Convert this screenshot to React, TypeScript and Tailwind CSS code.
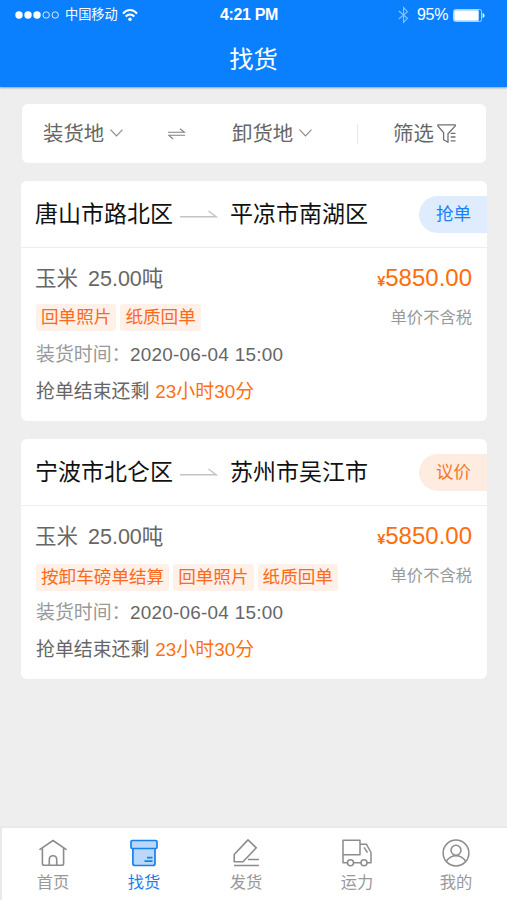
import React from "react";
import clsx from "clsx";

interface IOrder {
   id: number;
   from: string;
   to: string;
   action: string;
   actionType: "grab" | "negotiate";
   tags: string[];
}

const orders: IOrder[] = [
   {
      id: 1,
      from: "唐山市路北区",
      to: "平凉市南湖区",
      action: "抢单",
      actionType: "grab",
      tags: ["回单照片", "纸质回单"],
   },
   {
      id: 2,
      from: "宁波市北仑区",
      to: "苏州市吴江市",
      action: "议价",
      actionType: "negotiate",
      tags: ["按卸车磅单结算", "回单照片", "纸质回单"],
   },
];

const StatusBar = () => {
   return (
      <div className="flex h-[30px] items-center pr-[21px] pl-[15px] text-white">
         <div className="flex w-[205px] items-center">
            <svg width="46" height="8" viewBox="0 0 46 8">
               <circle cx="4" cy="4" r="3.7" fill="#fff" />
               <circle cx="13" cy="4" r="3.7" fill="#fff" />
               <circle cx="22" cy="4" r="3.7" fill="#fff" />
               <circle cx="31.2" cy="4" r="3.2" fill="none" stroke="#d6e8ff" />
               <circle cx="40.2" cy="4" r="3.2" fill="none" stroke="#d6e8ff" />
            </svg>
            <span className="ml-[4px] text-[13.2px] leading-[20px]">中国移动</span>
            <svg className="ml-[4px]" width="16" height="13" viewBox="0 0 16 13" fill="none" stroke="#fff" strokeWidth="2">
               <path d="M1 4.6C5-.1 11-.1 15 4.6" />
               <path d="M3.7 7.5C6.3 4.7 9.7 4.7 12.3 7.5" />
               <circle cx="8" cy="10.2" r="1.7" fill="#fff" stroke="none" />
            </svg>
         </div>
         <span className="w-[178px] text-[16px] font-bold tracking-[-0.35px]">4:21 PM</span>
         <svg width="11" height="18" viewBox="0 0 11 18" fill="none" stroke="#8cc0ff" strokeWidth="1.1">
            <path d="M.8 5 9.5 12.4 5.6 16.4V1.6L9.5 5.6.8 13" />
         </svg>
         <span className="ml-[8px] w-[36px] text-[16px] tracking-[-0.3px]">95%</span>
         <svg width="32" height="13" viewBox="0 0 32 13">
            <rect x=".5" y=".5" width="28" height="12" rx="1.8" fill="none" stroke="#a9d0ff" />
            <rect x="1.2" y="1.2" width="24.5" height="10.6" rx=".8" fill="#fff" />
            <path d="M29.6 4c2.6 1 2.6 4 0 5z" fill="#fff" />
         </svg>
      </div>
   );
};

const ChevronDown = () => (
   <svg className="ml-[6px]" width="13" height="8" viewBox="0 0 13 8" fill="none" stroke="#8a8a8a" strokeWidth="1.1">
      <path d="M.5.7 6.5 7l6-6.3" />
   </svg>
);

const FilterBar = () => {
   return (
      <div className="ml-[22px] flex h-[59px] w-[464px] items-center rounded-[6px] bg-white pl-[21px] text-[20.4px] text-[#666]">
         <div className="flex w-[125px] items-center">
            <span className="pt-[2px]">装货地</span>
            <ChevronDown />
         </div>
         <svg width="18" height="12" viewBox="0 0 18 12" fill="none" stroke="#808080" strokeWidth="1.1">
            <path d="M0 4.3H16.4L12 .8M17 7.3H.9L5 11" />
         </svg>
         <div className="ml-[46px] flex w-[125px] items-center">
            <span className="pt-[2px]">卸货地</span>
            <ChevronDown />
         </div>
         <div className="h-5 w-px bg-[#e6e6e6]" />
         <div className="ml-[35px] flex items-center">
            <span className="pt-[2px]">筛选</span>
            <svg className="ml-[3px]" width="20" height="19" viewBox="0 0 20 19" fill="none" stroke="#707070" strokeWidth="1.3">
               <path d="M12.2 8.5 18.3 1.9V.9H.9V2L6.6 8.6V15.7L11 18.3V9.7Z" strokeLinejoin="round" />
               <path d="M13.7 9.3H18.5M13.7 13H18.5M13.7 16.8H18.5" />
            </svg>
         </div>
      </div>
   );
};

const OrderCard = ({ order }: { order: IOrder }) => {
   return (
      <div className="ml-[21px] h-[240px] w-[466px] overflow-hidden rounded-[6px] bg-white pl-[15px]">
         <div className="-ml-[15px] flex h-[67px] items-center border-b border-[#eee] pl-[15px] text-[23px] text-[#111]">
            <span className="-ml-px w-[144px]">{order.from}</span>
            <svg className="ml-px" width="38" height="8" viewBox="0 0 38 8" fill="none" stroke="#c4c4c4" strokeWidth="1.4">
               <path d="M0 6.7H36L28.5 1" />
            </svg>
            <span className="ml-[12px] w-[189px]">{order.to}</span>
            <div
               className={clsx(
                  "flex h-[37px] flex-1 items-center rounded-l-full pl-[17px] text-[17.6px]",
                  order.actionType === "grab"
                     ? "bg-[#dfecfd] text-[#1683fa]"
                     : "bg-[#ffece1] text-[#f7762a]"
               )}
            >
               {order.action}
            </div>
         </div>
         <div className="mt-[11px] flex h-[38px] items-center justify-between pr-[15px]">
            <div className="-ml-px flex gap-[10px] pt-[2px] text-[21.5px] text-[#666]">
               <span>玉米</span>
               <span>25.00吨</span>
            </div>
            <div className="flex items-baseline text-[#ff6d0d]">
               <span className="text-[14.5px] font-bold">¥</span>
               <span className="text-[24px]">5850.00</span>
            </div>
         </div>
         <div className="flex h-[40px] items-center justify-between pr-[15px]">
            <div className={clsx("flex gap-[4px]", order.tags.length > 2 && "pt-[4px]")}>
               {order.tags.map((tag) => (
                  <span
                     key={tag}
                     className="flex h-[27px] items-center rounded-[3px] bg-[#fff0e8] px-[5px] text-[17.6px] text-[#fb6a1c]"
                  >
                     {tag}
                  </span>
               ))}
            </div>
            <span className="text-[16.3px] text-[#999]">单价不含税</span>
         </div>
         <div className="flex h-[36px] items-center text-[18.9px]">
            <span className="w-[94px] text-[#999]">装货时间：</span>
            <span className="tracking-[0.25px] text-[#666]">2020-06-04 15:00</span>
         </div>
         <div className="flex h-[38px] items-center gap-[6px] text-[18.9px]">
            <span className="text-[#666]">抢单结束还剩</span>
            <span className="text-[#ff7010]">23小时30分</span>
         </div>
      </div>
   );
};

const HomeIcon = () => (
   <svg width="28" height="28" viewBox="0 0 28 28" fill="none" stroke="#8c8c8c" strokeWidth="1.6" strokeLinejoin="round" strokeLinecap="round">
      <path d="M1 10.3 14 1.5 27 10.3M3.4 9.4V24.5Q3.4 26.3 5.2 26.3H22.8Q24.6 26.3 24.6 24.5V9.4" />
      <path d="M10.3 26V20.5C10.3 15.5 17.7 15.5 17.7 20.5V26" />
   </svg>
);

const BoxIcon = () => (
   <svg width="28" height="28" viewBox="0 0 28 28" fill="#b9d8fb" stroke="#1a80ec" strokeWidth="1.7" strokeLinejoin="round">
      <path d="M2.9 9H25V24.5Q25 26.5 23 26.5H5Q2.9 26.5 2.9 24.5Z" />
      <rect x="1" y="1.5" width="26" height="8" rx="1.2" />
      <path d="M17 18.6H22.5M14.5 22.2H22.5" />
   </svg>
);

const EditIcon = () => (
   <svg width="28" height="28" viewBox="0 0 28 28" fill="none" stroke="#8c8c8c" strokeWidth="1.6" strokeLinejoin="round">
      <path d="M2.2 22.7V15.5L16 .9 24.3 8.8 11 22.7ZM16 20.5H27M2 26.5H27" />
   </svg>
);

const TruckIcon = () => (
   <svg width="30" height="28" viewBox="0 0 30 28" fill="none" stroke="#8c8c8c" strokeWidth="1.5" strokeLinejoin="round">
      <path d="M1 1.3H18V15.7H1ZM18 5.3H24.5L29 13.5V23.7H25M1 15.7V23.7H5.5M11.5 23.7H19" />
      <path d="M22 8.3 25.5 13.6" />
      <circle cx="8.5" cy="23.8" r="3" />
      <circle cx="22" cy="23.8" r="3" />
   </svg>
);

const UserIcon = () => (
   <svg width="28" height="28" viewBox="0 0 28 28" fill="none" stroke="#8c8c8c" strokeWidth="1.5">
      <circle cx="14" cy="14" r="12.9" />
      <circle cx="14" cy="11.2" r="5" />
      <path d="M4.5 22C9 15 19 15 23.5 22" />
   </svg>
);

const tabs = [
   { label: "首页", icon: <HomeIcon />, className: "w-[66px] ml-[18px]" },
   { label: "找货", icon: <BoxIcon />, className: "w-[66px] ml-[25px]" },
   { label: "发货", icon: <EditIcon />, className: "w-[66px] ml-[36px]" },
   { label: "运力", icon: <TruckIcon />, className: "w-[66px] ml-[45px]" },
   { label: "我的", icon: <UserIcon />, className: "w-[66px] ml-[33px]" },
];

const TabBar = () => {
   return (
      <div className="flex h-[74px] border-t-2 border-l-2 border-[#e9e9e9] bg-white pt-[11px]">
         {tabs.map((tab) => (
            <div key={tab.label} className={clsx("flex flex-col items-center", tab.className)}>
               {tab.icon}
               <span
                  className={clsx(
                     "mt-[3px] text-[16.3px] leading-[24px]",
                     tab.label === "找货" ? "text-[#1a80ec]" : "text-[#999]"
                  )}
               >
                  {tab.label}
               </span>
            </div>
         ))}
      </div>
   );
};

const App = () => {
   return (
      <div className="flex h-[900px] w-[507px] flex-col overflow-hidden bg-[#eee] font-['Liberation_Sans','Noto_Sans_CJK_SC',sans-serif] whitespace-nowrap">
         <div className="h-[87px] shrink-0 bg-[#0b80ff] shadow-[0_1px_2px_rgba(0,0,0,0.35)]">
            <StatusBar />
            <div className="flex h-[57px] items-center justify-center pt-[3px] text-[24.3px] text-white">
               找货
            </div>
         </div>
         <div className="flex flex-1 flex-col gap-[18px] pt-[17px]">
            <FilterBar />
            {orders.map((order) => (
               <OrderCard key={order.id} order={order} />
            ))}
         </div>
         <TabBar />
      </div>
   );
};

export default App;
